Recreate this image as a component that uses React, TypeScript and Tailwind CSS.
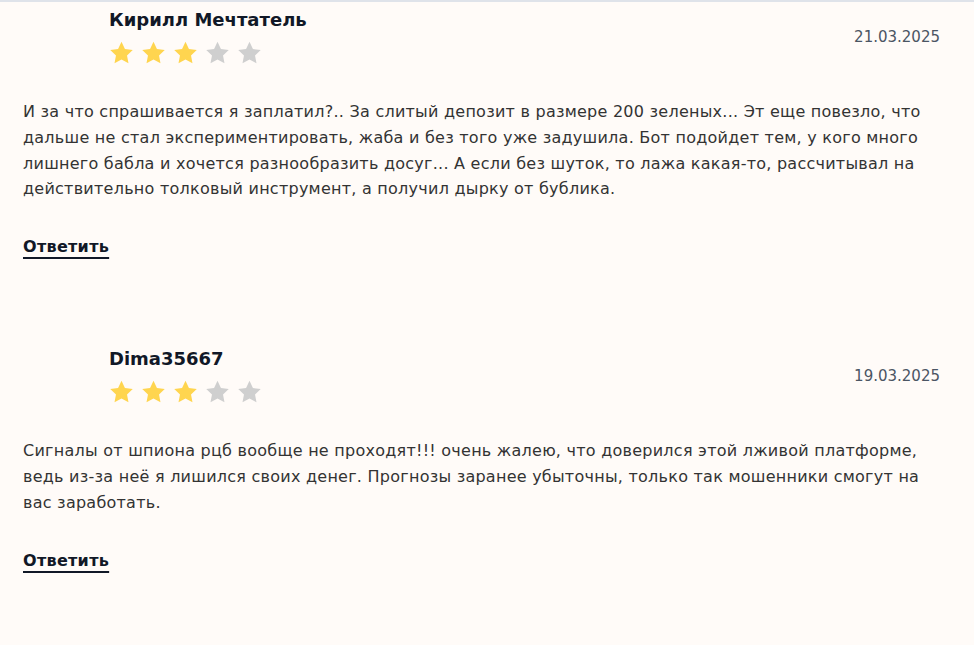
import React from "react";

type Review = {
  name: string;
  date: string;
  rating: number;
  text: string;
};

const reviews: Review[] = [
  {
    name: "Кирилл Мечтатель",
    date: "21.03.2025",
    rating: 3,
    text: "И за что спрашивается я заплатил?.. За слитый депозит в размере 200 зеленых... Эт еще повезло, что дальше не стал экспериментировать, жаба и без того уже задушила. Бот подойдет тем, у кого много лишнего бабла и хочется разнообразить досуг... А если без шуток, то лажа какая-то, рассчитывал на действительно толковый инструмент, а получил дырку от бублика.",
  },
  {
    name: "Dima35667",
    date: "19.03.2025",
    rating: 3,
    text: "Сигналы от шпиона рцб вообще не проходят!!! очень жалею, что доверился этой лживой платформе, ведь из-за неё я лишился своих денег. Прогнозы заранее убыточны, только так мошенники смогут на вас заработать.",
  },
];

const Star = ({ filled }: { filled: boolean }) => (
  <svg width="25" height="24" viewBox="0 0 24 23">
    <path
      d="M12 0.8l3.3 6.9 7.5 1-5.5 5.2 1.4 7.5L12 17.8l-6.7 3.6 1.4-7.5L1.2 8.7l7.5-1z"
      fill={filled ? "#ffd54f" : "#cfcfcf"}
    />
  </svg>
);

const ReviewItem = ({ review }: { review: Review }) => (
  <div className="pb-[88px]">
    <div className="flex justify-between">
      <div className="ml-[86px]">
        <div className="text-[18px] font-bold leading-[24px] text-[#111827]">
          {review.name}
        </div>
        <div className="flex gap-[7px] mt-[9px]">
          {[1, 2, 3, 4, 5].map((i) => (
            <Star key={i} filled={i <= review.rating} />
          ))}
        </div>
      </div>
      <div className="mt-[18px] text-[15px] text-[#4b5563]">{review.date}</div>
    </div>
    <p className="mt-[34px] text-[16px] tracking-[0.25px] leading-[25.8px] text-[#333333]">
      {review.text}
    </p>
    <a
      href="#"
      className="inline-block mt-[33px] text-[16px] tracking-[0.3px] font-bold text-[#111827] underline underline-offset-[5px] decoration-[1.5px]"
    >
      Ответить
    </a>
  </div>
);

export default function App() {
  return (
    <div
      className="min-h-screen w-full bg-[#fffbf8] border-t-2 border-[#dfe3ea]"
      style={{ fontFamily: '"DejaVu Sans", "Noto Sans", sans-serif' }}
    >
      <div className="pl-[23px] pr-[34px] pt-[6px]">
        {reviews.map((r) => (
          <ReviewItem key={r.name} review={r} />
        ))}
      </div>
    </div>
  );
}
